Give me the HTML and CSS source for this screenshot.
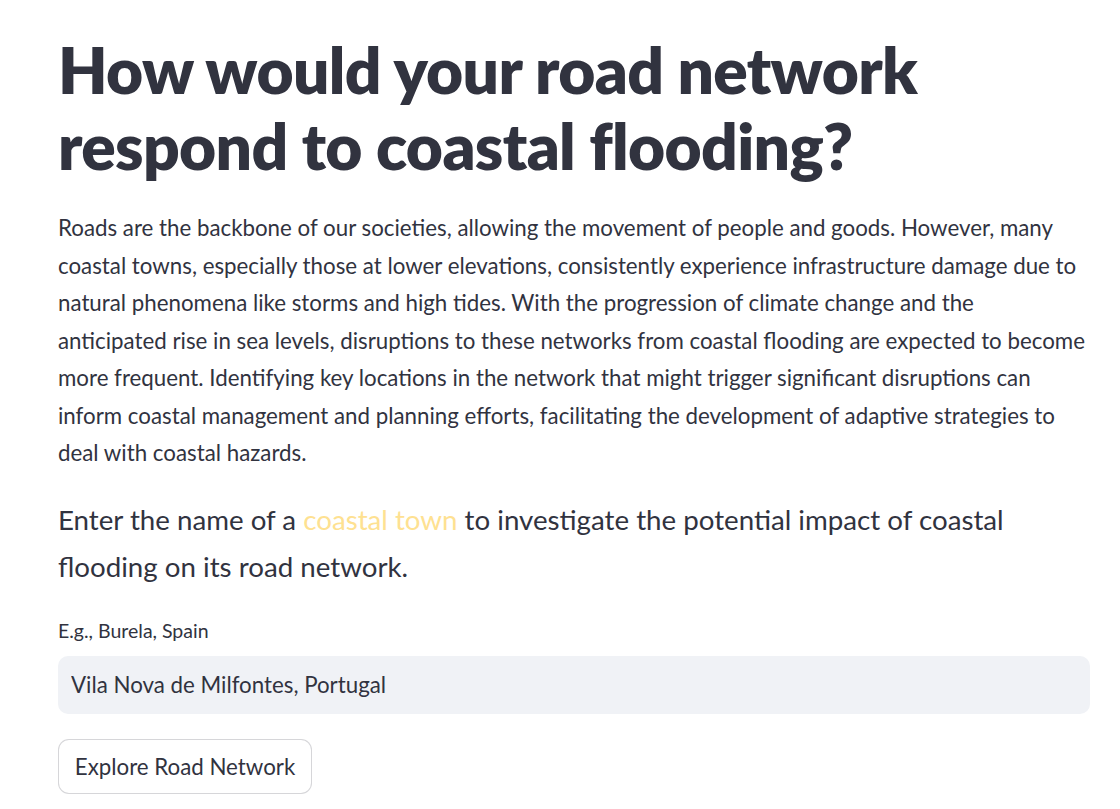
FILE: index.html
```html
<!DOCTYPE html>
<html lang="en">
<head>
<meta charset="utf-8">
<title>Coastal flooding road network</title>
<link rel="stylesheet" href="styles.css">
</head>
<body>
<main class="page">
  <h1 class="title">How would your road network respond to coastal flooding?</h1>
  <p class="intro">Roads are the backbone of our societies, allowing the movement of people and goods. However, many coastal towns, especially those at lower elevations, consistently experience infrastructure damage due to natural phenomena like storms and high tides. With the progression of climate change and the anticipated rise in sea levels, disruptions to these networks from coastal flooding are expected to become more frequent. Identifying key locations in the network that might trigger significant disruptions can inform coastal management and planning efforts, facilitating the development of adaptive strategies to deal with coastal hazards.</p>
  <p class="prompt">Enter the name of a <span class="accent">coastal town</span> to investigate the potential impact of coastal flooding on its road network.</p>
  <div class="field">
    <label class="field-label" for="town">E.g., Burela, Spain</label>
    <input class="field-input" id="town" type="text" value="Vila Nova de Milfontes, Portugal">
  </div>
  <button class="btn" type="button">Explore Road Network</button>
</main>
</body>
</html>
```
FILE: styles.css
```css
html, body {
  margin: 0;
  padding: 0;
  background: #ffffff;
}
body {
  font-family: Lato, "Noto Sans", sans-serif;
  color: #31333f;
}
.page {
  width: 1032px;
  padding: 32px 0 0 58px;
  display: flex;
  flex-direction: column;
  align-items: flex-start;
}
.title {
  margin: 0;
  font-size: 64px;
  line-height: 76px;
  font-weight: 800;
  color: #31333f;
  letter-spacing: -0.65px;
}
.intro {
  margin: 25px 0 0;
  max-width: 1027px;
  font-size: 22.3px;
  line-height: 37.5px;
}
.prompt {
  margin: 24px 0 0;
  font-size: 27.7px;
  line-height: 47px;
}
.accent {
  color: #fee191;
}
.field {
  width: 100%;
  margin-top: 27px;
  display: flex;
  flex-direction: column;
  gap: 11px;
}
.field-label {
  font-size: 19.5px;
  line-height: 28px;
}
.field-input {
  box-sizing: border-box;
  width: 100%;
  height: 58px;
  border: none;
  border-radius: 10px;
  background: #f0f2f6;
  padding: 0 13px;
  font-family: inherit;
  font-size: 22.3px;
  color: #31333f;
  outline: none;
}
.btn {
  margin-top: 25px;
  box-sizing: border-box;
  width: 254px;
  height: 55px;
  border: 1px solid rgba(49, 51, 63, 0.2);
  border-radius: 11px;
  background: #ffffff;
  font-family: inherit;
  font-size: 22.3px;
  color: #31333f;
}
```
